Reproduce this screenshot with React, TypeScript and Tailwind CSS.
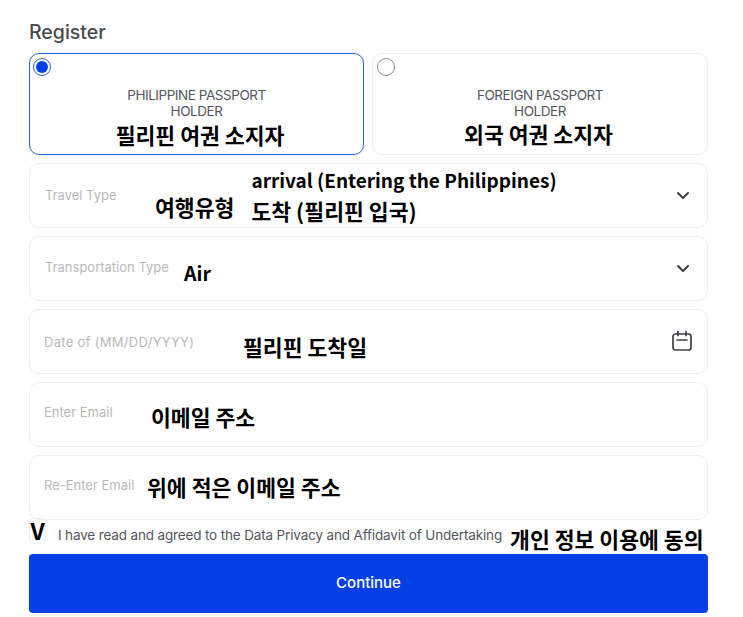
import React from "react";

const KO = "shrink-0 whitespace-nowrap font-bold text-black text-[21.6px] leading-[28px] font-['Noto_Sans_CJK_KR','Noto_Sans',sans-serif]";

function Chevron() {
  return (
    <svg width="14" height="9" viewBox="0 0 14 9" fill="none" className="ml-auto mr-[17px] shrink-0">
      <path d="M2 2l5 5 5-5" stroke="#3f3f46" strokeWidth="2" strokeLinecap="round" strokeLinejoin="round" />
    </svg>
  );
}

function Calendar() {
  return (
    <svg width="22" height="22" viewBox="0 0 22 22" fill="none" className="ml-auto mr-[14px] mb-[2px] shrink-0">
      <rect x="2" y="4" width="18" height="16" rx="2.5" stroke="#3f3f46" strokeWidth="1.7" />
      <path d="M7 1.5v4M15 1.5v4M6 10h10" stroke="#3f3f46" strokeWidth="1.7" strokeLinecap="round" />
    </svg>
  );
}

function Field({ label, labelClass, children }: { label: string; labelClass: string; children?: React.ReactNode }) {
  return (
    <div className="flex h-[65px] items-center rounded-[10px] border-[1.5px] border-[#f0f0f0] bg-white pl-[14px]">
      <span className={`shrink-0 whitespace-nowrap text-[13px] leading-[16px] text-[#b9b9b9] ${labelClass}`}>{label}</span>
      {children}
    </div>
  );
}

function Card({ selected, title, ko, koClass }: { selected?: boolean; title: React.ReactNode; ko: string; koClass: string }) {
  return (
    <div className={`flex h-[102px] flex-col items-center rounded-[10px] border-[1.5px] px-[3px] pt-[4px] ${selected ? "border-[#2a5fe8]" : "border-[#f0f0f0]"}`}>
      {selected ? (
        <span className="flex h-[18px] w-[18px] items-center justify-center self-start rounded-full border border-[#2a5fe8] bg-white">
          <span className="h-[12px] w-[12px] rounded-full bg-[#0440e6]" />
        </span>
      ) : (
        <span className="ml-[1px] h-[18px] w-[18px] self-start rounded-full border border-[#8a8a8a] bg-white" />
      )}
      <span className="mt-[11px] text-center text-[13.5px] leading-[16px] tracking-[-0.45px] text-[#55555f]">{title}</span>
      <span className={`${KO} ${koClass}`}>{ko}</span>
    </div>
  );
}

export default function App() {
  return (
    <div className="h-[617px] w-[743px] overflow-hidden bg-white pl-[29px] pr-[35px] pt-[20px] font-['Inter','Noto_Sans',sans-serif]">
      <h1 className="h-[33px] text-[19.5px] font-medium leading-[24px] text-[#4b4b4b]">Register</h1>
      <div className="grid grid-cols-[335px_336px] gap-2">
        <Card selected title={<>PHILIPPINE PASSPORT<br />HOLDER</>} ko="필리핀 여권 소지자" koClass="ml-[7px] mt-[2px]" />
        <Card title={<>FOREIGN PASSPORT<br />HOLDER</>} ko="외국 여권 소지자" koClass="-ml-[3px] mt-[1px]" />
      </div>
      <div className="mt-2 flex flex-col gap-2">
        <Field label="Travel Type" labelClass="mb-[2px] ml-[1px] w-[110px]">
          <span className={`${KO} mt-[23px]`}>여행유형</span>
          <div className="mb-[2px] ml-[17px] flex shrink-0 flex-col">
            <span className={`${KO} !text-[19px] !leading-[31px]`}>arrival (Entering the Philippines)</span>
            <span className={`${KO} !leading-[31px]`}>도착 (필리핀 입국)</span>
          </div>
          <Chevron />
        </Field>
        <Field label="Transportation Type" labelClass="mb-[3px] ml-[1px] w-[139px]">
          <span className={`${KO} mt-[9px] !text-[19.5px]`}>Air</span>
          <Chevron />
        </Field>
        <Field label="Date of (MM/DD/YYYY)" labelClass="w-[199px] tracking-[0.3px]">
          <span className={`${KO} mt-[11px]`}>필리핀 도착일</span>
          <Calendar />
        </Field>
        <Field label="Enter Email" labelClass="mb-[5px] w-[107px]">
          <span className={`${KO} mt-[4px]`}>이메일 주소</span>
        </Field>
        <Field label="Re-Enter Email" labelClass="mb-[5px] w-[103px]">
          <span className={`${KO} mb-[1px]`}>위에 적은 이메일 주소</span>
        </Field>
      </div>
      <div className="flex h-[34px] items-start">
        <span className={`${KO} -mt-[2px] flex h-[26px] w-[17px] items-start justify-center rounded-[4px] border border-[#f0f0f0] !text-[23px] !leading-[22px]`}>V</span>
        <span className="ml-[12px] mt-[7px] shrink-0 whitespace-nowrap text-[13.5px] leading-[16px] tracking-[-0.15px] text-[#55555f]">
          I have read and agreed to the Data Privacy and Affidavit of Undertaking
        </span>
        <span className={`${KO} ml-[8px] mt-[5px]`}>개인 정보 이용에 동의</span>
      </div>
      <button className="flex h-[59px] w-full items-center justify-center rounded-[4px] bg-[#0440e6] text-[15px] font-medium text-white">
        Continue
      </button>
    </div>
  );
}
